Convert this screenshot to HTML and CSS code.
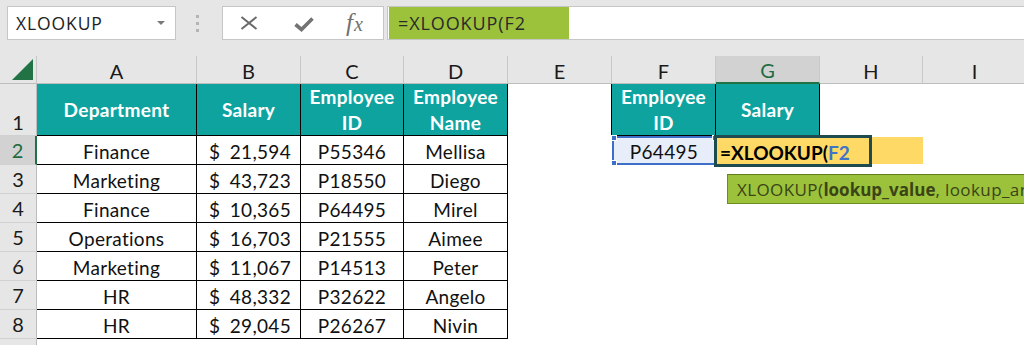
FILE: index.html
```html
<!DOCTYPE html>
<html>
<head>
<meta charset="utf-8">
<link rel="stylesheet" href="styles.css">
</head>
<body>
<div class="toolbar">
  <div class="namebox"><span>XLOOKUP</span><span class="caret"></span></div>
  <div class="dots"><i></i><i></i><i></i></div>
  <div class="fbtns">
    <svg class="ic-x" width="18" height="14" viewBox="0 0 18 14"><path d="M1.5 1 L16.5 13 M16.5 1 L1.5 13" stroke="#6a6a6a" stroke-width="2" fill="none"/></svg>
    <svg class="ic-ok" width="20" height="15" viewBox="0 0 20 15"><path d="M1.5 7.5 L7.5 12.5 L18.5 1.5" stroke="#737373" stroke-width="3.6" fill="none"/></svg>
    <span class="fx">f<span class="fx-x">x</span></span>
  </div>
  <div class="finput"><span class="fhl">=XLOOKUP(F2</span></div>
</div>
<div class="sheet">
  <div class="corner"><svg width="21" height="21" viewBox="0 0 21 21"><path d="M21 0 L21 21 L0 21 Z" fill="#217346"/></svg></div>
  <div class="ch">A</div><div class="ch">B</div><div class="ch">C</div><div class="ch">D</div><div class="ch">E</div><div class="ch">F</div><div class="ch sel">G</div><div class="ch">H</div><div class="ch">I</div>

  <div class="rh r1">1</div>
  <div class="c h">Department</div><div class="c h">Salary</div><div class="c h">Employee<br>ID</div><div class="c h">Employee<br>Name</div>
  <div class="e bl"></div><div class="c h">Employee<br>ID</div><div class="c h">Salary</div><div class="e"></div><div class="e"></div>

  <div class="rh sel">2</div>
  <div class="c">Finance</div><div class="c money"><span>$</span><span>21,594</span></div><div class="c">P55346</div><div class="c">Mellisa</div>
  <div class="e"></div>
  <div class="range">P64495<i class="hd tl"></i><i class="hd bl"></i><i class="hd tr"></i></div>
  <div class="edit-cell"><div class="editor">=XLOOKUP(<span class="ref">F2</span></div></div>
  <div class="e yel"></div><div class="e"></div>

  <div class="rh">3</div>
  <div class="c">Marketing</div><div class="c money"><span>$</span><span>43,723</span></div><div class="c">P18550</div><div class="c">Diego</div>
  <div class="e"></div><div class="e"></div><div class="e"></div><div class="e"></div><div class="e"></div>

  <div class="rh">4</div>
  <div class="c">Finance</div><div class="c money"><span>$</span><span>10,365</span></div><div class="c">P64495</div><div class="c">Mirel</div>
  <div class="e"></div><div class="e"></div><div class="e"></div><div class="e"></div><div class="e"></div>

  <div class="rh">5</div>
  <div class="c">Operations</div><div class="c money"><span>$</span><span>16,703</span></div><div class="c">P21555</div><div class="c">Aimee</div>
  <div class="e"></div><div class="e"></div><div class="e"></div><div class="e"></div><div class="e"></div>

  <div class="rh">6</div>
  <div class="c">Marketing</div><div class="c money"><span>$</span><span>11,067</span></div><div class="c">P14513</div><div class="c">Peter</div>
  <div class="e"></div><div class="e"></div><div class="e"></div><div class="e"></div><div class="e"></div>

  <div class="rh">7</div>
  <div class="c">HR</div><div class="c money"><span>$</span><span>48,332</span></div><div class="c">P32622</div><div class="c">Angelo</div>
  <div class="e"></div><div class="e"></div><div class="e"></div><div class="e"></div><div class="e"></div>

  <div class="rh">8</div>
  <div class="c">HR</div><div class="c money"><span>$</span><span>29,045</span></div><div class="c">P26267</div><div class="c">Nivin</div>
  <div class="e"></div><div class="e"></div><div class="e"></div><div class="e"></div><div class="e"></div>

  <div class="rh last"></div>

  <div class="tooltip"><span class="tt-text">XLOOKUP(<b>lookup_value</b>, lookup_arr</span></div>
</div>
</body>
</html>
```

FILE: styles.css
```css
* { box-sizing: border-box; margin: 0; padding: 0; }
html, body { width: 1024px; height: 345px; overflow: hidden; background: #e6e6e6; }
body { font-family: "Open Sans", "Noto Sans", sans-serif; }

.toolbar { height: 56px; display: flex; align-items: flex-start; padding: 6px 0 0 7px; }
.namebox { width: 169px; height: 34px; background: #fff; border: 1px solid #c6c6c6; display: flex; align-items: center; justify-content: space-between; padding: 0 10px 0 8px; font-size: 17.5px; color: #222; letter-spacing: 0.9px; }
.caret { width: 0; height: 0; border-left: 4px solid transparent; border-right: 4px solid transparent; border-top: 4px solid #7a7a7a; }
.dots { width: 46px; height: 34px; display: flex; flex-direction: column; align-items: center; justify-content: center; gap: 4px; padding-right: 4px; }
.dots i { display: block; width: 3px; height: 3px; background: #b4b4b4; }
.fbtns { width: 162px; height: 34px; background: #fff; border: 1px solid #c6c6c6; display: flex; align-items: center; padding-left: 17px; gap: 35px; }
.ic-ok { margin-top: 3px; margin-left: 1px; }
.fx { font-family: "Liberation Serif", "DejaVu Serif", serif; font-style: italic; font-size: 25px; color: #707070; line-height: 1; margin-left: -3px; margin-top: -1px; }
.fx-x { font-size: 20px; margin-left: 1px; }
.finput { flex: 1; margin-left: 3px; height: 34px; background: #fff; border: 1px solid #c6c6c6; border-right: none; display: flex; align-items: stretch; padding-left: 1px; }
.fhl { width: 180px; background: #9cc23c; color: #2a2a2a; font-size: 18px; letter-spacing: 0.9px; display: flex; align-items: center; padding-left: 9px; }

.sheet { position: relative; display: grid; grid-template-columns: 37px 160px 104px 103px 104px 104px 104px 104px 103px 104px; grid-template-rows: 28px 52px repeat(7, 29px) 6px; background: #fff; font-family: Lato, "Open Sans", sans-serif; color: #111; height: 289px; overflow: hidden; }
.corner { background: #e6e6e6; border-right: 1px solid #c8c8c8; border-bottom: 1px solid #bdbdbd; display: flex; justify-content: flex-end; align-items: flex-end; padding: 0 3px 3px 0; }
.ch { background: #e6e6e6; border-right: 1px solid #c8c8c8; border-bottom: 1px solid #bdbdbd; display: flex; align-items: center; justify-content: center; font-size: 20px; color: #1a1a1a; padding-top: 2px; }
.ch.sel { background: #d2d2d2; color: #1d6b40; border-bottom: 2px solid #217346; }
.rh { grid-column: 1; background: #e6e6e6; border-right: 1px solid #bdbdbd; border-bottom: 1px solid #d0d0d0; display: flex; align-items: center; justify-content: center; font-size: 20px; color: #1a1a1a; }
.rh.r1 { align-items: flex-end; padding-bottom: 1px; }
.rh.sel { background: #d2d2d2; border-right: 2px solid #217346; color: #1d6b40; }
.rh.last { border-bottom: none; }

.c { border-right: 1px solid #000; border-bottom: 1px solid #000; display: flex; align-items: center; justify-content: center; font-size: 19px; letter-spacing: 0.3px; padding-top: 2px; }
.h { background: #0fa3a0; color: #fff; font-weight: 700; line-height: 26px; text-align: center; padding-top: 1px; }
.money { justify-content: space-between; padding: 2px 9px 0 12px; }
.e { background: #fff; }
.e.bl { border-right: 1px solid #000; }
.e.yel { background: #ffd966; border-top: 1px solid #fff; border-bottom: 1px solid #fff; }

.range { position: relative; background: #e8eef9; border: 2px solid #3d6fc8; display: flex; align-items: center; justify-content: center; font-size: 19px; letter-spacing: 0.3px; padding-top: 1px; }
.hd { position: absolute; width: 6px; height: 6px; background: #3d6fc8; border: 1px solid #fff; }
.hd.tl { left: -3px; top: -3px; }
.hd.bl { left: -3px; bottom: -3px; }
.hd.tr { right: -4px; top: -3px; }

.edit-cell { position: relative; background: #ffd966; }
.editor { position: absolute; left: -2px; top: -1px; width: 158px; height: 32px; border: 3px solid #1d4b4f; background: #ffd966; z-index: 2; display: flex; align-items: center; padding: 2px 0 0 3px; font-size: 19px; font-weight: 700; color: #000; white-space: nowrap; }
.ref { color: #3f74c9; }

.tooltip { position: absolute; left: 727px; top: 118px; width: 297px; height: 30px; background: #9cc23c; border: 1px solid #6f8c22; border-top-color: #5f7d1a; border-right: none; color: #3a4416; font-family: "Open Sans", sans-serif; font-size: 17px; letter-spacing: 0.4px; white-space: nowrap; overflow: hidden; display: flex; align-items: center; padding-left: 9px; z-index: 3; }
.tooltip b { font-weight: 700; letter-spacing: 0; }
```
